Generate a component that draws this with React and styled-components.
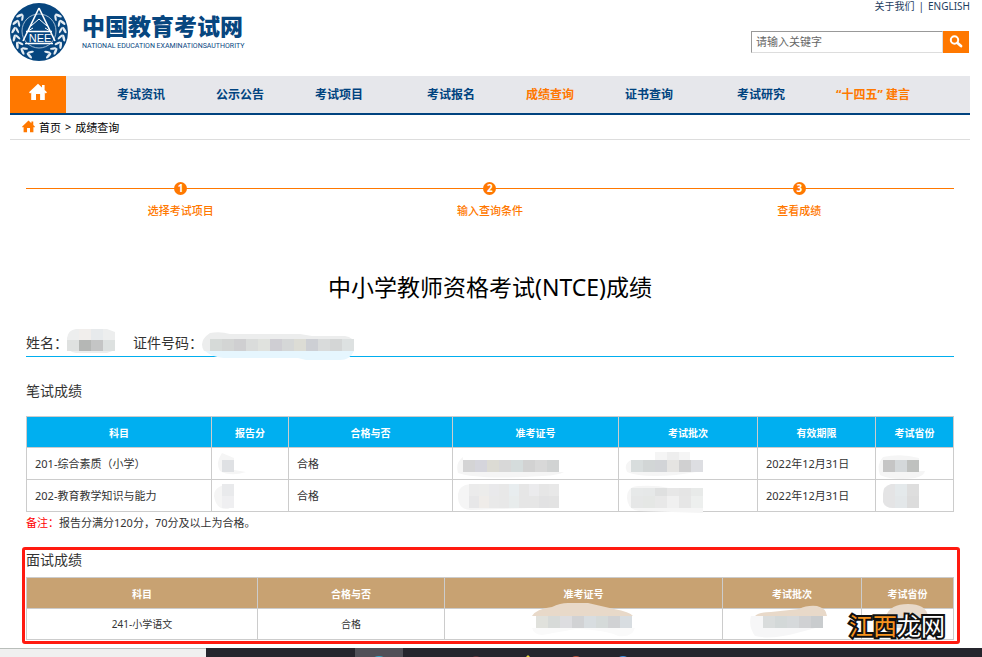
import styled, { createGlobalStyle } from "styled-components";

const GlobalStyle = createGlobalStyle`
  * {
    box-sizing: border-box;
  }
  body {
    margin: 0;
    background: #fff;
    color: #333;
    font-family: "Noto Sans", "Noto Sans CJK SC", sans-serif;
    font-size: 11px;
  }
  a {
    color: inherit;
    text-decoration: none;
  }
`;

const Page = styled.div`
  min-height: 100vh;
  display: flex;
  flex-direction: column;
`;
const Site = styled.div`
  padding: 0 12px 0 10px;
`;
const Header = styled.header`
  height: 76px;
  display: flex;
  justify-content: space-between;
`;
const Brand = styled.a`
  display: flex;
  align-items: flex-start;
  gap: 14px;
  padding-top: 2px;
  color: #07467f;
`;
const BrandText = styled.div`
  padding-top: 8px;
`;
const BrandName = styled.div`
  font-family: "Noto Sans CJK SC", sans-serif;
  font-size: 23px;
  font-weight: 900;
  line-height: 30px;
  white-space: nowrap;
`;
const BrandSub = styled.div`
  margin-top: 2px;
  font-family: Roboto, "Liberation Sans", sans-serif;
  font-size: 7px;
  line-height: 8px;
  white-space: nowrap;
`;
const HeaderSide = styled.div`
  display: flex;
  flex-direction: column;
  align-items: flex-end;
  gap: 19px;
`;
const TopLinks = styled.div`
  display: flex;
  gap: 4px;
  font-size: 10px;
  line-height: 12px;
  color: #1d3c5e;
`;
const Search = styled.form`
  display: flex;
  height: 22px;
  margin-right: 1px;
`;
const SearchInput = styled.input`
  width: 192px;
  padding: 0 4px 1px;
  border: 1px solid;
  border-color: #999 #ddd #ddd #999;
  font: inherit;
  outline: none;
  &::placeholder {
    color: #666;
    opacity: 1;
  }
`;
const SearchButton = styled.button`
  width: 26px;
  padding: 0;
  border: 0;
  background: #ff7800;
  display: flex;
  align-items: center;
  justify-content: center;
`;
const Nav = styled.nav`
  height: 39px;
  display: flex;
  background: #e6e7eb;
  border-bottom: 2px solid #00437f;
`;
const HomeLink = styled.a`
  width: 56px;
  margin-right: 25px;
  background: #ff7800;
  display: flex;
  justify-content: center;
  padding-top: 7px;
`;
const NavGroup = styled.div`
  display: flex;
  margin-right: 13px;
`;
const NavLink = styled.a`
  padding: 0 25px 0 26px;
  font-size: 12px;
  font-weight: 700;
  line-height: 38px;
  white-space: nowrap;
  color: ${(props) => (props.$active ? "#ff7800" : "#00437f")};
`;
const Crumbs = styled.div`
  height: 25px;
  display: flex;
  align-items: center;
  gap: 4px;
  padding: 0 0 1px 12px;
  border-bottom: 1px solid #ddd;
  color: #000;
`;
const Main = styled.main`
  padding: 0 16px;
`;
const Steps = styled.ol`
  margin: 40px 0 0;
  padding: 0;
  display: flex;
  list-style: none;
`;
const Step = styled.li`
  flex: 1;
  display: flex;
  flex-direction: column;
  align-items: center;
  gap: 8px;
  color: #ff7800;
  font-weight: 500;
  line-height: 16px;
  background: linear-gradient(#ff7800, #ff7800) 0 8px / 100% 1px no-repeat;
`;
const StepDot = styled.span`
  width: 13px;
  height: 13px;
  margin: 2px 0 0;
  border-radius: 50%;
  background: #ff7800;
  color: #fff;
  font-size: 10px;
  font-weight: 700;
  line-height: 13px;
  text-align: center;
`;
const Title = styled.h1`
  margin: 52px 0 0;
  font-size: 23px;
  font-weight: 400;
  line-height: 32px;
  text-align: center;
  color: #000;
`;
const Person = styled.div`
  height: 30px;
  margin-top: 24px;
  display: flex;
  font-size: 14px;
  line-height: 32px;
  border-bottom: 1px solid #00aeef;
`;
const PersonField = styled.div`
  display: flex;
  margin-right: 18px;
`;
const SectionTitle = styled.h2`
  margin: 0;
  font-size: 14px;
  font-weight: 400;
  line-height: 20px;
`;
const Written = styled.section`
  padding-top: 24px;
`;
const Table = styled.table`
  width: 100%;
  margin-top: ${(props) => props.$gap};
  border-collapse: collapse;
  table-layout: fixed;
  font-size: ${(props) => props.$size};
  text-align: ${(props) => props.$align};
  th {
    height: 31px;
    padding: 0;
    border: 1px solid #ccc;
    background: ${(props) => props.$head};
    color: #fff;
    font-size: 10px;
    font-weight: 700;
    text-align: center;
  }
  td {
    height: ${(props) => props.$row};
    padding: 0 8px;
    border: 1px solid #ccc;
    line-height: 16px;
    white-space: nowrap;
  }
`;
const Remark = styled.p`
  margin: 3px 0 0;
  line-height: 16px;
`;
const Red = styled.span`
  color: #f00;
`;
const Interview = styled.section`
  position: relative;
  margin: 16px 10px 0 12px;
  padding: 0 3px 1px 1px;
  border: 3px solid #ff1a10;
  border-radius: 3px;
`;
const Watermark = styled.div`
  position: absolute;
  right: 12px;
  bottom: 0;
  font-size: 24px;
  font-weight: 400;
  line-height: 30px;
  color: #fff;
  -webkit-text-stroke: 4px #111;
  paint-order: stroke fill;
  span {
    color: #f7931e;
  }
`;
const Taskbar = styled.footer`
  height: 9px;
  margin-top: auto;
  display: flex;
  background: #25252d;
`;
const TaskSearch = styled.div`
  width: 21%;
  border-top: 1px solid #b9beba;
  background: #f0f0f0;
`;
const TaskIcons = styled.svg`
  display: block;
  flex: 1;
  height: 9px;
`;
const MosaicSvg = styled.svg`
  display: block;
  flex: none;
  overflow: visible;
  margin: ${(props) => props.$margin || "0"};
`;

// a pixelated strip over a soft smear, cells run left to right in each row
const Mosaic = ({ width, height, smear, smearColor = "#f5f5f5", over, rows, margin }) => (
  <MosaicSvg width={width} height={height} $margin={margin} aria-hidden="true">
    <path d={smear} fill={smearColor} />
    {over && <path d={over.d} fill={over.fill} />}
    {rows.map((row) =>
      row.colors.map((color, i) => (
        <rect key={`${row.y}-${i}`} x={row.x + i * row.w} y={row.y} width={row.w} height={row.h} fill={color} />
      ))
    )}
  </MosaicSvg>
);

const House = ({ size, color }) => (
  <svg width={size} height={size} viewBox="0 0 18 18" aria-hidden="true">
    <path fill={color} d="M9 .8 13 4.5V2h2.6v5L18 9.2l-1.2 1.3-1-.9V17h-4.7v-6H7v6H2.2V9.6l-1 .9L0 9.2z" />
  </svg>
);

const leaves = [-38, -20, -2, 16, 34, 52, 70];

const Emblem = () => (
  <svg width="58" height="60" viewBox="0 0 58 60" aria-hidden="true">
    <circle cx="29" cy="30" r="29" fill="#07467f" />
    {[1, -1].map((side) => (
      <g key={side} transform={`translate(29 30) scale(${side} 1)`} fill="#e6edf3">
        {leaves.map((a) => (
          <g key={a} transform={`rotate(${a}) translate(23.5 0)`}>
            <ellipse cx="-2" cy="0" rx="1.1" ry="3.3" transform="rotate(30)" />
            <ellipse cx="2.2" cy="0" rx="1.3" ry="3.6" transform="rotate(-28)" />
          </g>
        ))}
      </g>
    ))}
    <circle cx="29" cy="29" r="17" fill="#07467f" stroke="#c9d7e4" strokeWidth=".8" />
    <g fill="none" stroke="#fff">
      <path d="M29 6 13 39M29 6l16 33M16 29.500h26M15 41.500h28" strokeWidth="1.6" />
      <path d="M21 24l8-7 8 7M18 29l5-3M40 29l-5-3" strokeWidth="1" />
    </g>
    <text x="30" y="39.500" textAnchor="middle" fill="#fff" fontFamily="Liberation Sans" fontSize="11">
      NEE
    </text>
  </svg>
);

const navGroups = [
  ["考试资讯", "公示公告", "考试项目"],
  ["考试报名", "成绩查询", "证书查询"],
  ["考试研究", "“十四五” 建言"],
];
const activeLinks = ["成绩查询", "“十四五” 建言"];
const steps = ["选择考试项目", "输入查询条件", "查看成绩"];

const writtenColumns = [
  ["科目", 185],
  ["报告分", 77],
  ["合格与否", 164],
  ["准考证号", 166],
  ["考试批次", 139],
  ["有效期限", 118],
  ["考试省份", 78],
];
const interviewColumns = [
  ["科目", 231],
  ["合格与否", 187],
  ["准考证号", 278],
  ["考试批次", 139],
  ["考试省份", 92],
];

const written = [
  {
    subject: "201-综合素质（小学）",
    score: { smear: "M0 1Q-7 11-2 19Q8 25 24 20L12 18V6z", rows: [{ x: 0, y: 8, w: 12, h: 12, colors: ["#dfe1e4"] }], margin: "0 0 0 2px" },
    ticket: {
      smear: "M0 5Q-8 11-5 21Q15 28 80 24Q96 23 101 20H0z",
      rows: [{ x: 0, y: 8, w: 12, h: 12, colors: ["#d4d4d5", "#d5d5dc", "#dcdbd4", "#d8d8d8", "#d5dcdc", "#d2d2d2", "#d8d8d8", "#d1d3d3"] }],
      margin: "0 0 0 2px",
    },
    batch: {
      smear: "M0 8Q-8 12-4 20Q10 26 45 23L72 19V9H59V0H24V8z",
      rows: [
        { x: 36, y: 0, w: 12, h: 8, colors: ["#eeeeee"] },
        { x: 0, y: 8, w: 12, h: 12, colors: ["#d8dddd", "#d2d6d6", "#d2d4d7", "#e5e4e2", "#d0d0d1", "#dddee2"] },
      ],
      margin: "0 0 0 4px",
    },
    province: {
      smear: "M0 5Q-7 13-3 23Q10 29 32 26Q41 24 42 19H36V6Q18 1 0 5z",
      rows: [{ x: 0, y: 8, w: 12, h: 12, colors: ["#c5c5c5", "#d4d8da", "#bfc1bf"] }],
      margin: "0 0 0 -1px",
    },
  },
  {
    subject: "202-教育教学知识与能力",
    score: {
      smear: "M12 0Q-8 0-8 12Q-6 26 6 25L12 22z",
      rows: [
        { x: 0, y: 0, w: 12, h: 12, colors: ["#e9eaec"] },
        { x: 0, y: 12, w: 12, h: 12, colors: ["#efeff1"] },
      ],
      margin: "0 0 0 2px",
    },
    ticket: {
      smear: "M8 0Q-6 1-5 14Q-4 26 8 26L96 23V0z",
      rows: [
        { x: 6, y: 0, w: 10, h: 12, colors: ["#ebebeb", "#ececeb", "#e9e9eb", "#e8e8e8", "#e8edef", "#e6e6e6", "#ebebed", "#e6e6e6", "#e8e8e8"] },
        { x: 6, y: 12, w: 10, h: 12, colors: ["#e7e7e8", "#efece9", "#e9e9e9", "#e8e8e8", "#e8ecec", "#e6e6e6", "#e6e6e6", "#e2e2e3", "#e3e3e3"] },
      ],
      margin: "0 0 0 2px",
    },
    batch: {
      smear: "M8 2Q-4 2-4 14Q-3 26 8 27L72 29V4H38Q25 1 8 2z",
      rows: [
        { x: 0, y: 4, w: 12, h: 8, colors: ["#e7e9e9", "#e6e8e8", "#dfe0e0", "#e7e7e7", "#e5e5e5", "#e8eae9"] },
        { x: 0, y: 12, w: 12, h: 12, colors: ["#e6e7e7", "#e5e7e5", "#e8e8e8", "#f0f0f0", "#e6e6e6", "#edefee"] },
      ],
      margin: "0 0 0 4px",
    },
    province: {
      smear: "M8 0Q0 2 0 10V18Q2 24 10 24H36V0z",
      smearColor: "#e4e4e5",
      rows: [
        { x: 12, y: 0, w: 12, h: 12, colors: ["#e4e9eb", "#dedede"] },
        { x: 12, y: 12, w: 12, h: 12, colors: ["#e3e7e9", "#dcdcdc"] },
      ],
      margin: "0 0 0 -1px",
    },
  },
];

const HeadRow = ({ columns }) => (
  <>
    <colgroup>
      {columns.map(([name, width]) => (
        <col key={name} style={{ width: `${(width / 927) * 100}%` }} />
      ))}
    </colgroup>
    <thead>
      <tr>
        {columns.map(([name]) => (
          <th key={name} scope="col">
            {name}
          </th>
        ))}
      </tr>
    </thead>
  </>
);

const App = () => {
  return (
    <Page>
      <GlobalStyle />
      <Site>
        <Header>
          <Brand href="#">
            <Emblem />
            <BrandText>
              <BrandName>中国教育考试网</BrandName>
              <BrandSub>NATIONAL EDUCATION EXAMINATIONSAUTHORITY</BrandSub>
            </BrandText>
          </Brand>
          <HeaderSide>
            <TopLinks>
              <a href="#">关于我们</a>
              <span>|</span>
              <a href="#">ENGLISH</a>
            </TopLinks>
            <Search onSubmit={(e) => e.preventDefault()}>
              <SearchInput type="text" placeholder="请输入关键字" aria-label="请输入关键字" />
              <SearchButton type="submit" aria-label="搜索">
                <svg width="14" height="14" viewBox="0 0 14 14" fill="none" stroke="#fff" aria-hidden="true">
                  <circle cx="5.500" cy="5" r="3.700" strokeWidth="2" />
                  <path d="m8.500 8 3.500 3" strokeWidth="2.800" strokeLinecap="round" />
                </svg>
              </SearchButton>
            </Search>
          </HeaderSide>
        </Header>
        <Nav>
          <HomeLink href="#" aria-label="首页">
            <House size={18} color="#fff" />
          </HomeLink>
          {navGroups.map((group) => (
            <NavGroup key={group[0]}>
              {group.map((name) => (
                <NavLink key={name} href="#" $active={activeLinks.includes(name)}>
                  {name}
                </NavLink>
              ))}
            </NavGroup>
          ))}
        </Nav>
        <Crumbs>
          <House size={13} color="#ff7800" />
          <a href="#">首页</a>
          <span>&gt;</span>
          <a href="#">成绩查询</a>
        </Crumbs>
        <Main>
          <Steps>
            {steps.map((name, i) => (
              <Step key={name}>
                <StepDot>{i + 1}</StepDot>
                {name}
              </Step>
            ))}
          </Steps>
          <Title>中小学教师资格考试(NTCE)成绩</Title>
          <Person>
            <PersonField>
              姓名：
              <Mosaic
                width={48}
                height={26}
                smear="M9 2H40L48 5V23L40 26H9Q0 25 0 17V11Q1 3 9 2z"
                smearColor="#edeeee"
                rows={[
                  { x: 12, y: 2, w: 12, h: 11, colors: ["#f1eeec", "#e7eaec"] },
                  { x: 0, y: 13, w: 12, h: 11, colors: ["#dfe1e0", "#b5b7b5", "#c4c5c5", "#dde1e0"] },
                ]}
                margin="0 0 0 -1px"
              />
            </PersonField>
            <PersonField>
              证件号码：
              <Mosaic
                width={154}
                height={29}
                smear="M10 6Q20 4 30 7H100L112 9H145Q154 10 154 18V24H4Q-2 14 10 6z"
                smearColor="#eceded"
                over={{ d: "M5 24H154Q150 33 140 33H106L98 31H24Q12 30 5 24z", fill: "#e6f6fe" }}
                rows={[{ x: 10, y: 12, w: 12, h: 12, colors: ["#d6dad8", "#d3d5d4", "#cfcfd1", "#dadcdb", "#e0e2de", "#cfced3", "#d5d7d7", "#dcdcd5", "#cdcfd4", "#d9dbdb", "#d4d6d6", "#dde1e1"] }]}
                margin="0 0 0 -3px"
              />
            </PersonField>
          </Person>
          <Written>
            <SectionTitle>笔试成绩</SectionTitle>
            <Table $gap="15px" $size="11px" $align="left" $head="#00aff0" $row="32px">
              <HeadRow columns={writtenColumns} />
              <tbody>
                {written.map((row) => (
                  <tr key={row.subject}>
                    <td>{row.subject}</td>
                    <td>
                      <Mosaic width={12} height={24} {...row.score} />
                    </td>
                    <td>合格</td>
                    <td>
                      <Mosaic width={96} height={24} {...row.ticket} />
                    </td>
                    <td>
                      <Mosaic width={72} height={24} {...row.batch} />
                    </td>
                    <td>2022年12月31日</td>
                    <td>
                      <Mosaic width={36} height={24} {...row.province} />
                    </td>
                  </tr>
                ))}
              </tbody>
            </Table>
            <Remark>
              <Red>备注：</Red>报告分满分120分，70分及以上为合格。
            </Remark>
          </Written>
        </Main>
        <Interview>
          <SectionTitle>面试成绩</SectionTitle>
          <Table $gap="7px" $size="10px" $align="center" $head="#c8a272" $row="31px">
            <HeadRow columns={interviewColumns} />
            <tbody>
              <tr>
                <td>241-小学语文</td>
                <td>合格</td>
                <td>
                  <Mosaic
                    width={96}
                    height={12}
                    smear="M-4 12Q-2 19 6 19L40 13Q70 14 82 20Q96 22 99 12z"
                    smearColor="#fafafa"
                    over={{ d: "M-4 0Q0-7 16-9Q24-13 32-13H52L78-7Q94-4 97 0z", fill: "#e8d9c9" }}
                    rows={[{ x: 0, y: 0, w: 12, h: 12, colors: ["#e0e1dc", "#d7dad8", "#dddde0", "#d1d2d4", "#d8dde0", "#d5dad9", "#d1d2d4", "#d8dde1"] }]}
                    margin="0 auto 4px"
                  />
                </td>
                <td>
                  <Mosaic
                    width={82}
                    height={12}
                    smear="M0 0H72V10L46 17Q20 24 4 20Q-3 10 0 0z"
                    smearColor="#f6f6f7"
                    over={{ d: "M4 0Q8-4 20-4L48-7Q56-11 66-10Q75-8 76 0z", fill: "#e8d9c9" }}
                    rows={[{ x: 12, y: 0, w: 12, h: 12, colors: ["#d9dcdc", "#d3d8d8", "#d6d9db", "#d0d1d3", "#c9ccce"] }]}
                    margin="0 auto 4px"
                  />
                </td>
                <td>
                  <Mosaic
                    width={36}
                    height={12}
                    smear="M0 12V20H36V12z"
                    smearColor="#fafafa"
                    over={{ d: "M-4 0Q0-12 18-12Q36-12 38 0z", fill: "#e8d9c9" }}
                    rows={[{ x: 0, y: 0, w: 12, h: 12, colors: ["#ddd", "#d5d8d8", "#ddd"] }]}
                    margin="0 auto 4px"
                  />
                </td>
              </tr>
            </tbody>
          </Table>
          <Watermark>
            <span>江西</span>龙网
          </Watermark>
        </Interview>
      </Site>
      <Taskbar>
        <TaskSearch />
        <TaskIcons aria-hidden="true">
          <rect x="149" width="48" height="9" fill="#505058" />
          <circle cx="173" cy="18" r="10" fill="#35a8c8" />
          <circle cx="270" cy="14" r="6" fill="#5c3038" />
          <path d="m320 9 2-2 2 2z" fill="#e6d63c" />
          <circle cx="370" cy="15" r="7" fill="#b8503c" />
          <circle cx="417" cy="16" r="8" fill="#3b8ee0" />
        </TaskIcons>
      </Taskbar>
    </Page>
  );
};

export default App;
